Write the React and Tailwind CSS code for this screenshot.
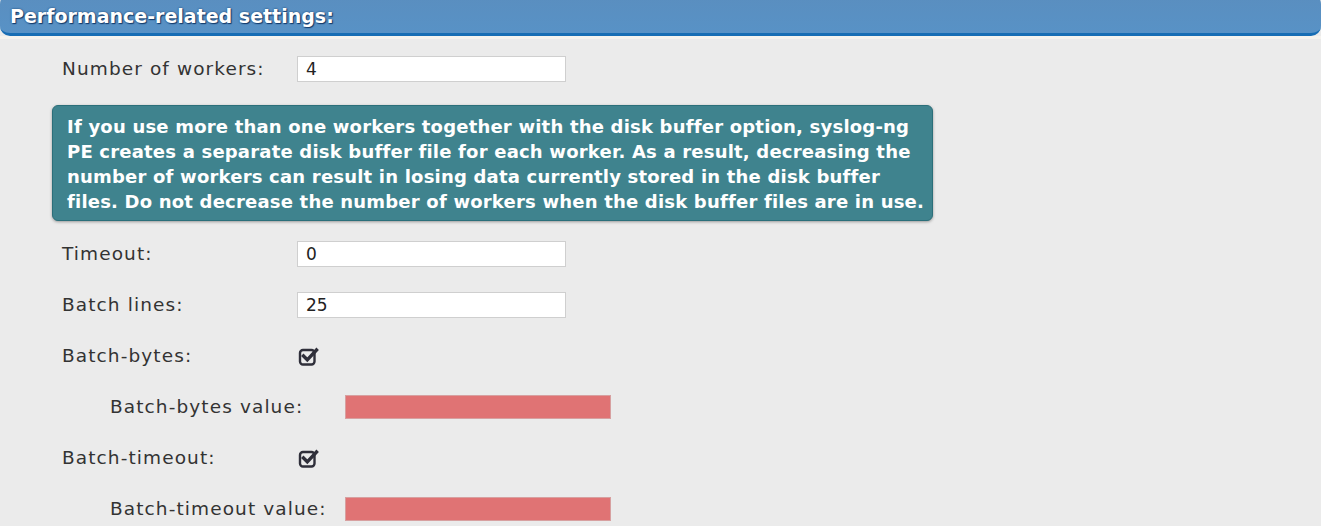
import { useState } from "react";

function CheckIcon() {
  return (
    <svg width="22" height="22" viewBox="0 0 22 22" className="block">
      <rect x="2" y="5" width="14.5" height="14.5" rx="3" fill="none" stroke="#2f2f3a" strokeWidth="2.4" />
      <path d="M5.5 11 L9.3 14.8 L18.5 5" fill="none" stroke="#2f2f3a" strokeWidth="3.4" strokeLinecap="square" />
    </svg>
  );
}

function Row({ label, indent, children }) {
  return (
    <div className={`flex h-[51px] items-center ${indent ? "pl-[110px]" : "pl-[62px]"}`}>
      <label className="w-[235px] shrink-0 text-[18.5px] tracking-[1.1px] text-[#333]">{label}</label>
      {children}
    </div>
  );
}

function TextInput({ value, invalid }) {
  const [val, setVal] = useState(value || "");
  return (
    <input
      value={val}
      onChange={(e) => setVal(e.target.value)}
      className={
        invalid
          ? "h-[24px] w-[266px] border border-[#d7a0a0] bg-[#e07374] px-2 text-[17px] outline-none"
          : "h-[26px] w-[269px] border border-[#cfcfcf] bg-white px-2 text-[17px] text-[#222] outline-none"
      }
    />
  );
}

export default function App() {
  return (
    <div className="min-h-[526px] bg-[#ebebeb] font-['DejaVu_Sans',sans-serif]">
      <div className="-mt-[6px] flex h-[42px] items-end rounded-[10px] border-b-[3px] border-[#176db4] bg-gradient-to-b from-[#5a8ebf] to-[#5892c6] pb-[3px] pl-[10px]">
        <h2 className="text-[19px] font-bold text-white [text-shadow:0_0_2px_#123a6b,1px_1px_1px_#123a6b]">
          Performance-related settings:
        </h2>
      </div>
      <div className="h-[3px] bg-[#f5f3ee]" />

      <div className="mt-[4px] flex flex-col">
        <Row label="Number of workers:">
          <TextInput value="4" />
        </Row>

        <div className="ml-[52px] mt-[11px] w-[881px] rounded-[6px] border border-[#2b6f7a] bg-[#3f838e] pb-[6px] pl-[14px] pt-[8px] text-[18px] font-bold leading-[25px] tracking-[0.2px] text-white shadow-[0_1px_3px_rgba(0,0,0,0.35)]">
          If you use more than one workers together with the disk buffer option, syslog-ng
          <br />
          PE creates a separate disk buffer file for each worker. As a result, decreasing the
          <br />
          number of workers can result in losing data currently stored in the disk buffer
          <br />
          files. Do not decrease the number of workers when the disk buffer files are in use.
        </div>

        <div className="mt-[7px]">
          <Row label="Timeout:">
            <TextInput value="0" />
          </Row>
          <Row label="Batch lines:">
            <TextInput value="25" />
          </Row>
          <Row label="Batch-bytes:">
            <div className="pl-[1px]">
              <CheckIcon />
            </div>
          </Row>
          <Row label="Batch-bytes value:" indent>
            <TextInput invalid />
          </Row>
          <Row label="Batch-timeout:">
            <div className="pl-[1px]">
              <CheckIcon />
            </div>
          </Row>
          <Row label="Batch-timeout value:" indent>
            <TextInput invalid />
          </Row>
        </div>
      </div>
    </div>
  );
}
